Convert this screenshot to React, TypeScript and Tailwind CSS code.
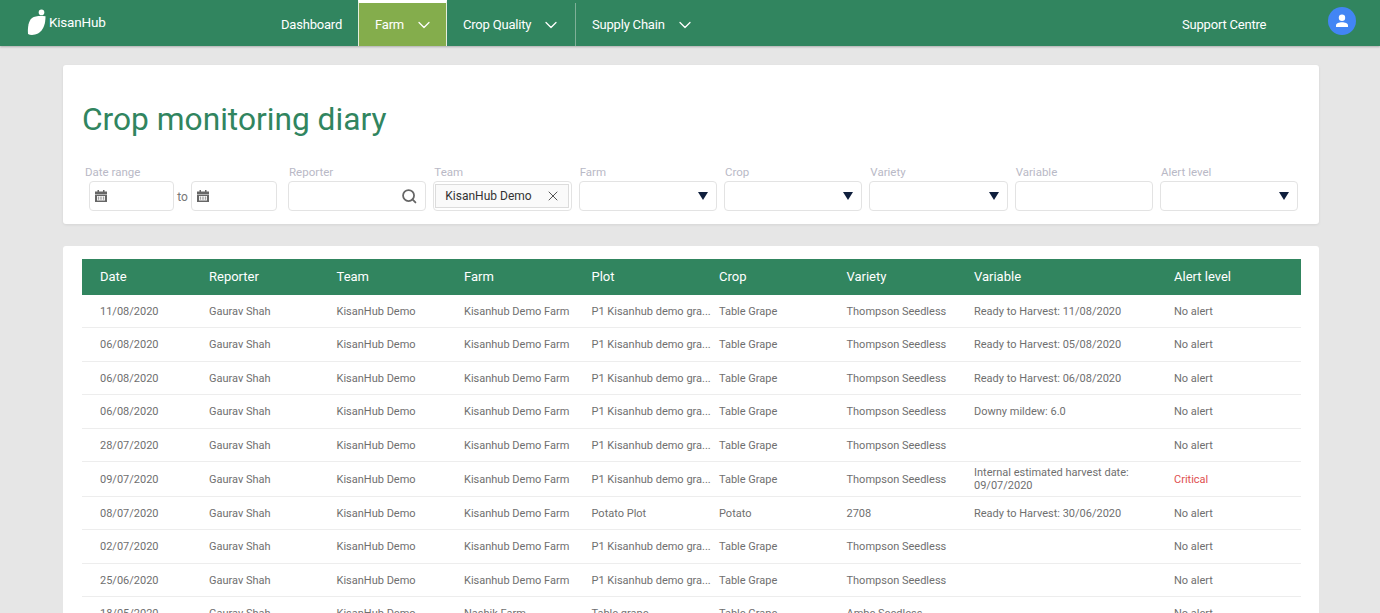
import { ChevronDown, Search, X } from "lucide-react"

const rows = [
  ["11/08/2020", "Gaurav Shah", "KisanHub Demo", "Kisanhub Demo Farm", "P1 Kisanhub demo gra...", "Table Grape", "Thompson Seedless", "Ready to Harvest: 11/08/2020", "No alert"],
  ["06/08/2020", "Gaurav Shah", "KisanHub Demo", "Kisanhub Demo Farm", "P1 Kisanhub demo gra...", "Table Grape", "Thompson Seedless", "Ready to Harvest: 05/08/2020", "No alert"],
  ["06/08/2020", "Gaurav Shah", "KisanHub Demo", "Kisanhub Demo Farm", "P1 Kisanhub demo gra...", "Table Grape", "Thompson Seedless", "Ready to Harvest: 06/08/2020", "No alert"],
  ["06/08/2020", "Gaurav Shah", "KisanHub Demo", "Kisanhub Demo Farm", "P1 Kisanhub demo gra...", "Table Grape", "Thompson Seedless", "Downy mildew: 6.0", "No alert"],
  ["28/07/2020", "Gaurav Shah", "KisanHub Demo", "Kisanhub Demo Farm", "P1 Kisanhub demo gra...", "Table Grape", "Thompson Seedless", "", "No alert"],
  ["09/07/2020", "Gaurav Shah", "KisanHub Demo", "Kisanhub Demo Farm", "P1 Kisanhub demo gra...", "Table Grape", "Thompson Seedless", "Internal estimated harvest date: 09/07/2020", "Critical"],
  ["08/07/2020", "Gaurav Shah", "KisanHub Demo", "Kisanhub Demo Farm", "Potato Plot", "Potato", "2708", "Ready to Harvest: 30/06/2020", "No alert"],
  ["02/07/2020", "Gaurav Shah", "KisanHub Demo", "Kisanhub Demo Farm", "P1 Kisanhub demo gra...", "Table Grape", "Thompson Seedless", "", "No alert"],
  ["25/06/2020", "Gaurav Shah", "KisanHub Demo", "Kisanhub Demo Farm", "P1 Kisanhub demo gra...", "Table Grape", "Thompson Seedless", "", "No alert"],
  ["18/05/2020", "Gaurav Shah", "KisanHub Demo", "Nashik Farm", "Table grape", "Table Grape", "Ambe Seedless", "", "No alert"],
]

const headers = ["Date", "Reporter", "Team", "Farm", "Plot", "Crop", "Variety", "Variable", "Alert level"]

function Calendar() {
  return (
    <svg width="12" height="12" viewBox="0 0 12 12" fill="#666">
      <rect x="2.5" y="0" width="1.5" height="2" />
      <rect x="8" y="0" width="1.5" height="2" />
      <path d="M0 1.5h12v2.5h-12z" />
      <path d="M0 4.5h12v7.5h-12z M2 6v4.5h8V6z" fillRule="evenodd" />
      <path d="M2.8 6.6h1.4v3.2h-1.4z M5.3 6.6h1.4v3.2h-1.4z M7.8 6.6h1.4v3.2h-1.4z" opacity="0.6" />
    </svg>
  )
}

function Field({ label, children, caret }: { label: string; children?: React.ReactNode; caret?: boolean }) {
  return (
    <div className="w-[138.33px]">
      <div className="h-[16px] text-[11.5px] leading-[16px] text-[#b9b9c6] pl-px">{label}</div>
      <div className="h-[30px] mt-[1px] border border-[#e3e3e3] rounded-[4px] bg-white flex items-center justify-end pr-2">
        {children}
        {caret && <div className="w-0 h-0 border-l-[5px] border-r-[5px] border-t-[8px] border-l-transparent border-r-transparent border-t-[#0f1f3d]" />}
      </div>
    </div>
  )
}

export default function App() {
  return (
    <div className="h-[613px] overflow-hidden bg-[#e6e6e6] font-['Roboto',sans-serif]">
      <nav className="h-[46px] bg-[#31855f] shadow-[0_1px_2px_rgba(0,0,0,0.25)] flex items-stretch text-white text-[13px] tracking-[-0.2px]">
        <div className="w-[281px] pl-[27px] flex items-center gap-[3px] pb-[3px]">
          <svg width="19" height="28" viewBox="0 0 19 28" fill="white">
            <circle cx="14.5" cy="4.4" r="2.8" />
            <path d="M1 26 C0.5 19 1.5 13 5 10 C8 8 13 7.8 18.5 8.3 C18.5 15 17 22 11 25.5 C8 27 3.5 27.5 1 26 Z" />
          </svg>
          <span className="text-[13.5px] mt-[1px]">KisanHub</span>
        </div>
        <div className="w-[77px] flex items-center pt-[4px]">Dashboard</div>
        <div className="w-[89px] bg-[#84ad4c] border-t-[3px] border-white border-x border-x-[#e4eedd] flex items-center pl-[16px] pt-px">
          Farm
          <ChevronDown size={20} className="ml-[10px]" strokeWidth={1.5} />
        </div>
        <div className="w-[129px] flex items-center pl-[16px] pt-px border-r border-[#7fb098] mt-[3px]">
          Crop Quality
          <ChevronDown size={20} className="ml-[10px]" strokeWidth={1.5} />
        </div>
        <div className="w-[606px] flex items-center pl-[16px] pt-[4px]">
          Supply Chain
          <ChevronDown size={20} className="ml-[10px]" strokeWidth={1.5} />
        </div>
        <div className="w-[146px] flex items-center pt-[4px]">Support Centre</div>
        <div className="mt-[7px] w-[28px] h-[28px] rounded-full bg-[#4285f4] flex items-center justify-center">
          <svg width="14" height="14" viewBox="0 0 14 14" fill="white">
            <circle cx="7" cy="3.8" r="3.2" />
            <path d="M1 13v-1.5C1 9.5 4 8.3 7 8.3s6 1.2 6 3.2V13z" />
          </svg>
        </div>
      </nav>

      <div className="px-[63px] pr-[61px] pt-[19px]">
        <section className="h-[159px] bg-white rounded-[3px] shadow-[0_1px_3px_rgba(0,0,0,0.08)] pl-[19px] pt-[34px]">
          <h1 className="text-[31.7px] leading-[42px] text-[#31855f]">Crop monitoring diary</h1>
          <div className="flex gap-[7px] mt-[23px]">
            <div className="w-[199px] pl-[3px]">
              <div className="h-[16px] text-[11.5px] leading-[16px] text-[#b9b9c6]">Date range</div>
              <div className="mt-[1px] pl-[4px] flex items-center h-[30px]">
                <div className="w-[85px] h-[30px] border border-[#e3e3e3] rounded-[4px] flex items-center pl-[5px]">
                  <Calendar />
                </div>
                <span className="w-[17px] text-[12px] text-center text-[#777] pt-[2px]">to</span>
                <div className="w-[86px] h-[30px] border border-[#e3e3e3] rounded-[4px] flex items-center pl-[5px]">
                  <Calendar />
                </div>
              </div>
            </div>
            <Field label="Reporter">
              <Search size={16.5} strokeWidth={2.6} className="text-[#666]" />
            </Field>
            <Field label="Team">
              <div className="flex-1 flex items-center justify-between h-[24px] -mr-[6px] ml-[1px] border border-[#dcdcdc] bg-[#fafafa] pl-[9px] pr-[7px] text-[12px] text-[#333]">
                KisanHub Demo
                <X size={16} strokeWidth={1.5} className="text-[#555]" />
              </div>
            </Field>
            <Field label="Farm" caret />
            <Field label="Crop" caret />
            <Field label="Variety" caret />
            <Field label="Variable" />
            <Field label="Alert level" caret />
          </div>
        </section>

        <section className="mt-[22px] h-[400px] bg-white rounded-[3px] pt-[13px] pl-[19px] pr-[18px]">
          <div className="grid grid-cols-[109px_127.5px_127.5px_127.5px_127.5px_127.5px_127.5px_200px_145px] h-[35.5px] items-center bg-[#31855f] text-white text-[13px]">
            {headers.map((h) => (
              <div key={h} className="pl-[18px]">{h}</div>
            ))}
          </div>
          {rows.map((row, i) => (
            <div
              key={i}
              className={`grid grid-cols-[109px_127.5px_127.5px_127.5px_127.5px_127.5px_127.5px_200px_145px] items-center border-b border-[#ededed] text-[11px] leading-[13px] text-[#6f6f6f] pt-px ${i === 5 ? "h-[34.5px]" : "h-[33.5px]"}`}
            >
              {row.map((cell, j) => (
                <div key={j} className={`pl-[18px] ${j === 7 ? "pr-[12px]" : "whitespace-nowrap"} ${cell === "Critical" ? "text-[#e04f4f]" : ""}`}>
                  {cell}
                </div>
              ))}
            </div>
          ))}
        </section>
      </div>
    </div>
  )
}
